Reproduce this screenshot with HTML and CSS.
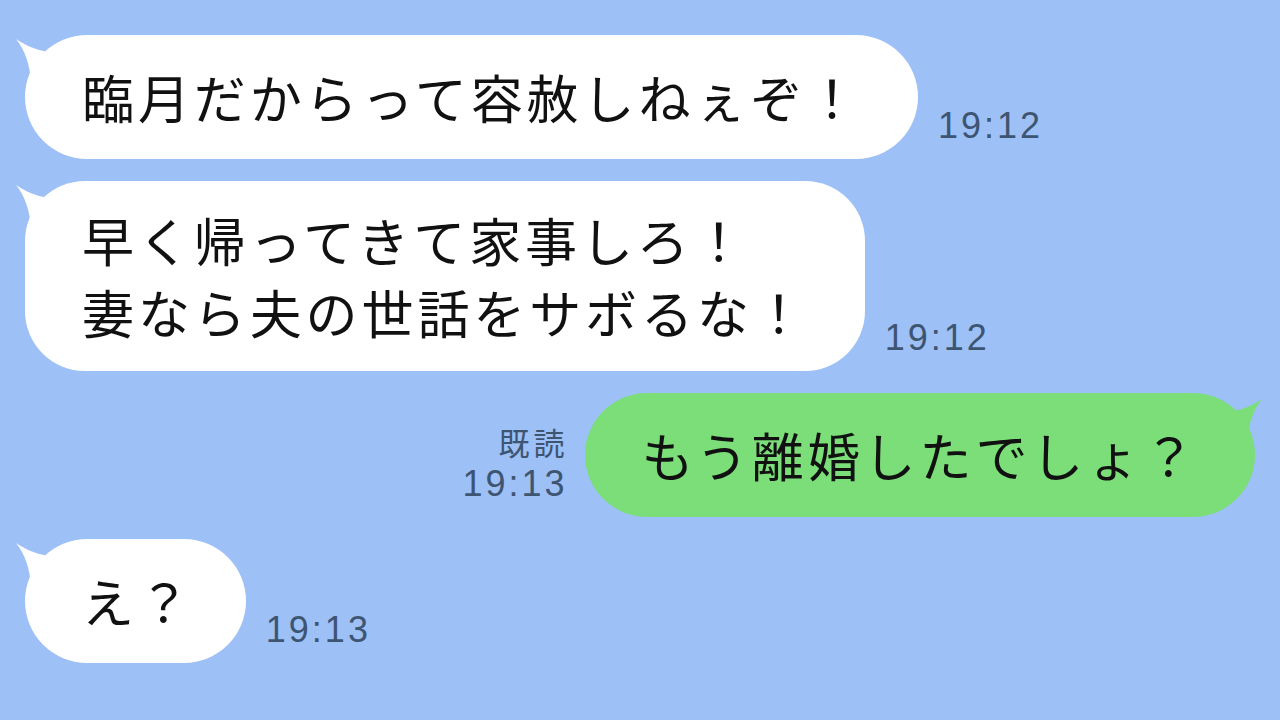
FILE: index.html
```html
<!DOCTYPE html>
<html lang="ja">
<head>
    <meta charset="UTF-8">
    <title>トーク</title>
    <link rel="stylesheet" href="styles.css">
</head>
<body>
    <div class="chat">
        <div class="row">
            <div class="bubble">
                <svg class="tail" width="40" height="50" viewBox="0 0 40 50"><path d="M1 4 C10 10 20 15 34 17 L34 48 L16 48 C15 30 10 15 1 4 Z"/></svg>
                <p>臨月だからって容赦しねぇぞ！</p>
            </div>
            <span class="time">19:12</span>
        </div>

        <div class="row">
            <div class="bubble multi">
                <svg class="tail" width="40" height="50" viewBox="0 0 40 50"><path d="M1 4 C10 10 20 15 34 17 L34 48 L16 48 C15 30 10 15 1 4 Z"/></svg>
                <p>早く帰ってきて家事しろ！<br>妻なら夫の世話をサボるな！</p>
            </div>
            <span class="time">19:12</span>
        </div>

        <div class="row mine">
            <div class="meta">
                <span class="read">既読</span>
                <span class="time">19:13</span>
            </div>
            <div class="bubble green">
                <svg class="tail" width="40" height="50" viewBox="0 0 40 50"><path d="M1 4 C10 10 20 15 34 17 L34 48 L16 48 C15 30 10 15 1 4 Z"/></svg>
                <p>もう離婚したでしょ？</p>
            </div>
        </div>

        <div class="row">
            <div class="bubble short">
                <svg class="tail" width="40" height="50" viewBox="0 0 40 50"><path d="M1 4 C10 10 20 15 34 17 L34 48 L16 48 C15 30 10 15 1 4 Z"/></svg>
                <p>え？</p>
            </div>
            <span class="time">19:13</span>
        </div>
    </div>
</body>
</html>
```

FILE: styles.css
```css
body {
    margin: 0;
    height: 720px;
    overflow: hidden;
    background-color: #9dc0f7;
    font-family: "Noto Sans CJK JP", "Noto Sans", sans-serif;
}

.chat {
    padding: 35px 25px 0 25px;
    display: flex;
    flex-direction: column;
    gap: 22px;
}

.row {
    display: flex;
    align-items: flex-end;
    gap: 20px;
}

.row.mine {
    justify-content: flex-end;
}

.bubble {
    position: relative;
    box-sizing: border-box;
    min-height: 124px;
    display: flex;
    align-items: center;
    padding: 23px 56px 23px 57px;
    background-color: #fff;
    border-radius: 62px;
}

.bubble.multi {
    border-radius: 60px;
}

.bubble.short {
    padding-right: 52px;
}

.bubble p {
    margin: 0;
    font-size: 52px;
    line-height: 72px;
    letter-spacing: 3.9px;
    color: #111;
    white-space: nowrap;
}

.tail {
    position: absolute;
    left: -10px;
    top: 0;
    fill: #fff;
}

.bubble.green {
    background-color: #7bde78;
}

.bubble.green .tail {
    left: auto;
    right: -8px;
    top: 2px;
    fill: #7bde78;
    transform: scaleX(-1);
}

.time {
    font-family: "Liberation Sans", Arial, sans-serif;
    font-size: 36px;
    line-height: 36px;
    letter-spacing: 3px;
    color: #3e5571;
    margin-bottom: 15px;
}

.meta {
    display: flex;
    flex-direction: column;
    align-items: flex-end;
    margin-bottom: 15px;
}

.meta .time {
    margin-bottom: 0;
    margin-right: -3px;
}

.read {
    font-size: 31px;
    line-height: 36px;
    letter-spacing: 4px;
    margin-right: -4px;
    margin-bottom: 6px;
    color: #3e5571;
}
```
